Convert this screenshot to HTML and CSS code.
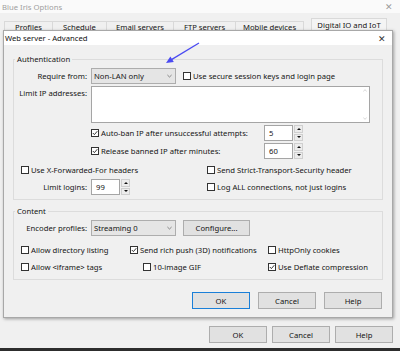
FILE: index.html
```html
<!DOCTYPE html>
<html lang="en">
<head>
    <meta charset="UTF-8">
    <title>Web server - Advanced</title>
    <link rel="stylesheet" href="styles.css">
</head>
<body>
    <div class="app">
        <div class="app-title">
            <span>Blue Iris Options</span>
            <span class="app-close">&#x2715;</span>
        </div>
        <div class="tabs">
            <span class="tab t1">Profiles</span>
            <span class="tab t2">Schedule</span>
            <span class="tab t3">Email servers</span>
            <span class="tab t4">FTP servers</span>
            <span class="tab t5">Mobile devices</span>
            <span class="tab tab-on">Digital IO and IoT</span>
        </div>
        <div class="app-main"></div>
        <div class="btns app-btns">
            <button class="btn">OK</button>
            <button class="btn">Cancel</button>
            <button class="btn">Help</button>
        </div>
    </div>
    <div class="taskbar"></div>

    <div class="dialog">
        <div class="dlg-title">
            <span>Web server - Advanced</span>
            <span class="dlg-close">&#x2715;</span>
        </div>
        <div class="dlg-body">
            <fieldset class="group auth">
                <legend>Authentication</legend>

                <div class="row r1">
                    <span class="lbl">Require from:</span>
                    <div class="select">
                        <span>Non-LAN only</span>
                        <svg class="chev" viewBox="0 0 6 4"><path d="M0.5 0.8 L3 3.2 L5.5 0.8"/></svg>
                    </div>
                    <label class="chk after-select"><span class="box"></span>Use secure session keys and login page</label>
                </div>

                <div class="row r2">
                    <span class="lbl top">Limit IP addresses:</span>
                    <div class="ta">
                        <div class="ta-scroll">
                            <svg viewBox="0 0 6 4"><path d="M0.5 3.2 L3 0.8 L5.5 3.2"/></svg>
                            <svg viewBox="0 0 6 4"><path d="M0.5 0.8 L3 3.2 L5.5 0.8"/></svg>
                        </div>
                    </div>
                </div>

                <div class="row r3 indent">
                    <label class="chk w-ban"><span class="box"><svg viewBox="0 0 6 6"><path d="M0.8 3 L2.4 4.6 L5.3 1.2"/></svg></span>Auto-ban IP after unsuccessful attempts:</label>
                    <div class="spin">
                        <span class="spin-val">5</span>
                        <div class="spin-btns">
                            <span class="up"></span>
                            <span class="down"></span>
                        </div>
                    </div>
                </div>

                <div class="row r4 indent">
                    <label class="chk w-ban"><span class="box"><svg viewBox="0 0 6 6"><path d="M0.8 3 L2.4 4.6 L5.3 1.2"/></svg></span>Release banned IP after minutes:</label>
                    <div class="spin">
                        <span class="spin-val">60</span>
                        <div class="spin-btns">
                            <span class="up"></span>
                            <span class="down"></span>
                        </div>
                    </div>
                </div>

                <div class="row r5">
                    <div class="half pad">
                        <label class="chk"><span class="box"></span>Use X-Forwarded-For headers</label>
                    </div>
                    <label class="chk"><span class="box"></span>Send Strict-Transport-Security header</label>
                </div>

                <div class="row r6">
                    <div class="half">
                        <span class="lbl">Limit logins:</span>
                        <div class="spin">
                            <span class="spin-val">99</span>
                            <div class="spin-btns">
                                <span class="up"></span>
                                <span class="down"></span>
                            </div>
                        </div>
                    </div>
                    <label class="chk"><span class="box"></span>Log ALL connections, not just logins</label>
                </div>
            </fieldset>

            <fieldset class="group content">
                <legend>Content</legend>

                <div class="row c1">
                    <span class="lbl">Encoder profiles:</span>
                    <div class="select">
                        <span>Streaming 0</span>
                        <svg class="chev" viewBox="0 0 6 4"><path d="M0.5 0.8 L3 3.2 L5.5 0.8"/></svg>
                    </div>
                    <button class="btn btn-conf">Configure...</button>
                </div>

                <div class="row c2 pad">
                    <label class="chk w-dir"><span class="box"></span>Allow directory listing</label>
                    <label class="chk w-push"><span class="box"><svg viewBox="0 0 6 6"><path d="M0.8 3 L2.4 4.6 L5.3 1.2"/></svg></span>Send rich push (3D) notifications</label>
                    <label class="chk"><span class="box"></span>HttpOnly cookies</label>
                </div>

                <div class="row c3 pad">
                    <label class="chk w-iframe"><span class="box"></span>Allow &lt;iframe&gt; tags</label>
                    <label class="chk w-gif"><span class="box"></span>10-image GIF</label>
                    <label class="chk"><span class="box"><svg viewBox="0 0 6 6"><path d="M0.8 3 L2.4 4.6 L5.3 1.2"/></svg></span>Use Deflate compression</label>
                </div>
            </fieldset>

            <div class="btns dlg-btns">
                <button class="btn btn-default">OK</button>
                <button class="btn">Cancel</button>
                <button class="btn">Help</button>
            </div>
        </div>
    </div>

    <!-- annotation arrow pointing at the "Require from" drop-down -->
    <svg class="arrow" viewBox="0 0 400 351">
        <line x1="199" y1="43" x2="171.5" y2="59.6"/>
        <polygon points="166,63 173.8,62 170.4,56.6"/>
    </svg>
</body>
</html>
```

FILE: styles.css
```css
body {
    margin: 0;
    width: 400px;
    height: 351px;
    overflow: hidden;
    position: relative;
    background: #f0f0f0;
    font-family: "Noto Sans", "Open Sans", sans-serif;
    font-size: 7.7px;
    color: #151515;
}
button {
    font-family: inherit;
    font-size: 7.7px;
    color: #151515;
}

/* parent window */
.app {
    height: 348px;
    display: flex;
    flex-direction: column;
    background: #f0f0f0;
}
.app-title {
    height: 13px;
    background: #fafafa;
    display: flex;
    align-items: center;
    justify-content: space-between;
    padding: 0 7px 0 2px;
    color: #a0a0a0;
}
.app-close {
    font-size: 9px;
    color: #9a9a9a;
}
.tabs {
    margin-top: 5px;
    height: 15px;
    padding-left: 4px;
    display: flex;
    align-items: flex-end;
}
.tab {
    height: 12px;
    line-height: 10px;
    box-sizing: border-box;
    border: 1px solid #d9d9d9;
    border-bottom: none;
    margin-right: -1px;
    text-align: center;
    background: #f0f0f0;
}
.t1 { width: 49px; }
.t2 { width: 55px; }
.t3 { width: 68px; }
.t4 { width: 63px; }
.t5 { width: 69px; }
.tab-on {
    width: 76px;
    height: 15px;
    line-height: 13px;
    margin-left: 8px;
    background: #f4f4f4;
}
.app-main {
    flex: 1;
}
.btns {
    display: flex;
    justify-content: flex-end;
}
.app-btns {
    gap: 5px;
    padding: 0 7px 5px 0;
}
.btn {
    width: 58px;
    height: 17px;
    padding: 0;
    background: #e1e1e1;
    border: 1px solid #adadad;
}
.taskbar {
    height: 3px;
    background: #2d2d2d;
}

/* child dialog, a window lying over the parent */
.dialog {
    position: absolute;
    left: 3px;
    top: 30px;
    width: 388px;
    border: 1px solid #a8a8a8;
    background: #f0f0f0;
    box-shadow: 1px 1px 3px rgba(0, 0, 0, 0.35);
}
.dlg-title {
    height: 14px;
    background: #fff;
    display: flex;
    align-items: center;
    justify-content: space-between;
    padding: 0 6px 0 1px;
    color: #111;
}
.dlg-close {
    font-size: 9px;
    color: #333;
}
.dlg-body {
    padding: 0 9px 8px;
}

.group {
    margin: 9px 0 0;
    padding: 0 0 4px;
    border: 1px solid #dcdcdc;
    min-width: 0;
}
.group legend {
    line-height: 10px;
    padding: 0 2px;
    margin-left: 1px;
}
.content {
    margin-top: 6px;
    padding-bottom: 6px;
}

.row {
    display: flex;
    align-items: center;
}
.lbl {
    width: 73px;
    margin-right: 4px;
    text-align: right;
    flex-shrink: 0;
}
.lbl.top {
    align-self: flex-start;
    margin-top: 2px;
}
.indent {
    padding-left: 77px;
}
.pad {
    padding-left: 7px;
}
.half {
    width: 193px;
    display: flex;
    align-items: center;
    box-sizing: border-box;
    flex-shrink: 0;
}

.r1 { margin-top: 4px; }
.r2 { margin-top: 2px; }
.r3 { margin-top: 2px; }
.r4 { margin-top: 2px; }
.r5 { margin-top: 5px; }
.r6 { margin-top: 3px; }
.c1 { margin-top: 4px; }
.c2 { margin-top: 8px; }
.c3 { margin-top: 5px; }

.select {
    width: 85px;
    height: 16px;
    box-sizing: border-box;
    border: 1px solid #adadad;
    background: #e5e5e5;
    display: flex;
    align-items: center;
    justify-content: space-between;
    padding: 0 3px 0 2px;
}
.chev {
    width: 5px;
    height: 4px;
}
.chev path, .ta-scroll path {
    fill: none;
    stroke: #555;
    stroke-width: 0.8;
}
.after-select {
    margin-left: 7px;
}
.btn-conf {
    width: 67px;
    height: 16px;
    margin-left: 7px;
}

.chk {
    display: flex;
    align-items: center;
    gap: 2px;
    white-space: nowrap;
    height: 12px;
}
.box {
    width: 8px;
    height: 8px;
    box-sizing: border-box;
    border: 1px solid #333;
    background: #fff;
    flex-shrink: 0;
    display: flex;
}
.box svg {
    width: 6px;
    height: 6px;
}
.box path {
    fill: none;
    stroke: #222;
    stroke-width: 0.9;
}
.w-ban { width: 173px; }
.w-dir { width: 109px; }
.w-push { width: 138px; }
.w-iframe { width: 122px; }
.w-gif { width: 125px; }

.ta {
    width: 279px;
    height: 37px;
    box-sizing: border-box;
    border: 1px solid #a5a5a5;
    background: #fff;
    display: flex;
    justify-content: flex-end;
}
.ta-scroll {
    width: 9px;
    display: flex;
    flex-direction: column;
    justify-content: space-between;
    align-items: center;
    padding: 2px 0;
}
.ta-scroll svg {
    width: 4px;
    height: 3px;
}
.ta-scroll path {
    stroke: #b0b0b0;
}

.spin {
    display: flex;
    height: 16px;
}
.spin-val {
    width: 29px;
    box-sizing: border-box;
    border: 1px solid #a5a5a5;
    background: #fff;
    padding-left: 4px;
    line-height: 14px;
}
.spin-btns {
    width: 9px;
    display: flex;
    flex-direction: column;
    gap: 1px;
    padding-left: 1px;
}
.spin-btns span {
    flex: 1;
    border: 1px solid #cfcfcf;
    background: #ececec;
    display: flex;
    align-items: center;
    justify-content: center;
}
.spin-btns .up::after,
.spin-btns .down::after {
    content: "";
    border-left: 2px solid transparent;
    border-right: 2px solid transparent;
}
.spin-btns .up::after {
    border-bottom: 2px solid #111;
}
.spin-btns .down::after {
    border-top: 2px solid #111;
}

.dlg-btns {
    margin-top: 12px;
    gap: 8px;
    padding-right: 1px;
}
.btn-default {
    border-color: #1a7fd8;
}

.arrow {
    position: absolute;
    left: 0;
    top: 0;
    width: 400px;
    height: 351px;
    pointer-events: none;
}
.arrow line {
    stroke: #4a4af2;
    stroke-width: 1.3;
}
.arrow polygon {
    fill: #4a4af2;
}
```
